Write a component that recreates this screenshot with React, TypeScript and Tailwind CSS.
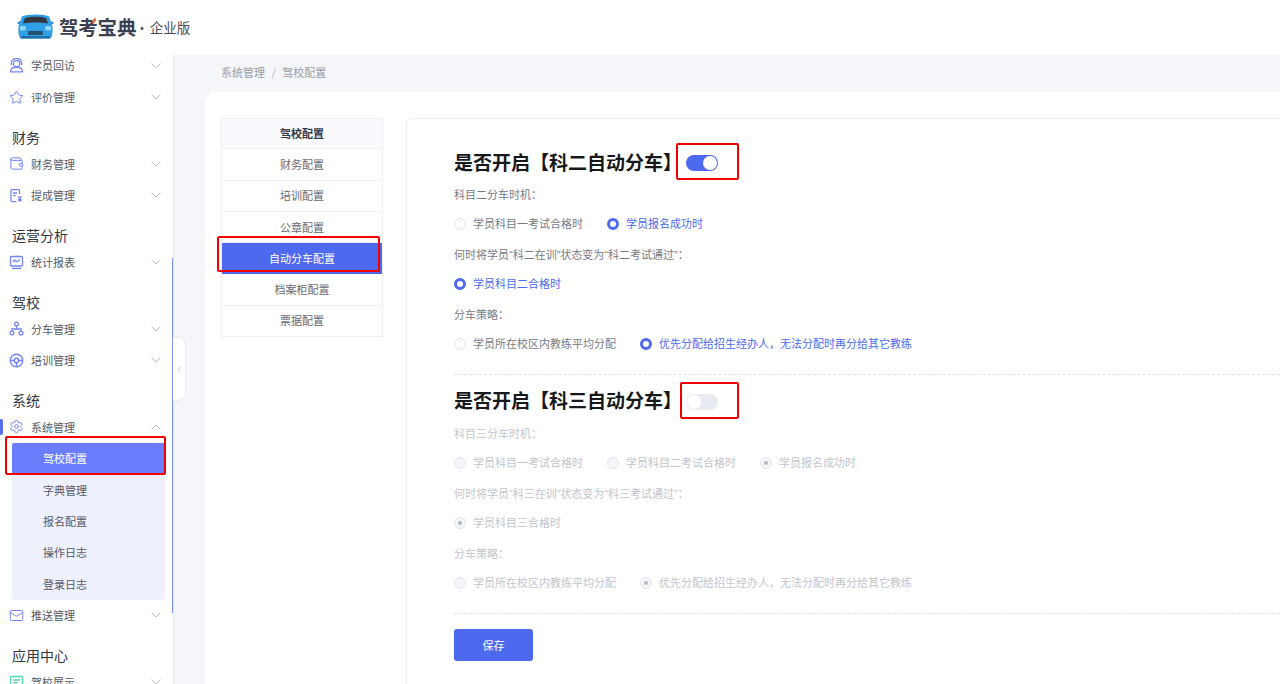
import { ChevronDown, ChevronUp, ChevronLeft, Star, Wallet, Settings, Mail } from "lucide-react";
import type { ReactNode } from "react";

const C = "#7485fb";

const IconUser = () => (
  <svg width="15" height="15" viewBox="0 0 15 15" fill="none" stroke={C} strokeWidth="1.3">
    <circle cx="7.5" cy="5.6" r="3.2" />
    <path d="M2.3 7V5.5a5.2 5.2 0 0 1 10.4 0V7" />
    <path d="M1.500 13.800c0-2.600 1.800-4.200 4-4.500h4c2.200.3 4 1.900 4 4.500z" />
  </svg>
);
const IconFile = () => (
  <svg width="15" height="15" viewBox="0 0 15 15" fill="none" stroke={C} strokeWidth="1.3">
    <path d="M10.500 6V2.600a1 1 0 0 0-1-1H3a1 1 0 0 0-1 1v10a1 1 0 0 0 1 1h4.500" />
    <path d="M4 5h4M4 7.600h2.500" />
    <path d="M9.300 8.300l1.600 1.900 1.600-1.900M10.900 10.200v3.400M9.200 11.300h3.400M9.200 12.600h3.400" />
  </svg>
);
const IconChart = () => (
  <svg width="15" height="15" viewBox="0 0 15 15" fill="none" stroke={C} strokeWidth="1.3">
    <rect x="1.500" y="1.500" width="12" height="9.500" rx="1" />
    <path d="M3.800 7l2-1.800 2.200 1.600 3-2.400" />
    <path d="M3 13.400h9" />
  </svg>
);
const IconTree = () => (
  <svg width="15" height="15" viewBox="0 0 15 15" fill="none" stroke={C} strokeWidth="1.3">
    <circle cx="7.500" cy="3" r="1.900" />
    <circle cx="2.900" cy="12" r="1.900" />
    <circle cx="12.100" cy="12" r="1.900" />
    <path d="M7.500 5v3M2.900 10V8h9.200v2" />
  </svg>
);
const IconWheel = () => (
  <svg width="15" height="15" viewBox="0 0 15 15" fill="none" stroke={C} strokeWidth="1.400">
    <circle cx="7.500" cy="7.500" r="6.300" />
    <circle cx="7.500" cy="7.500" r="2.200" />
    <path d="M1.200 7.500h3.800M10 7.500h3.800M7.500 10v3.800" />
  </svg>
);
const IconGreen = () => (
  <svg width="15" height="15" viewBox="0 0 15 15" fill="none" stroke="#56d8a8" strokeWidth="1.300">
    <rect x="1.500" y="1.500" width="12" height="12" rx="1" />
    <path d="M4.200 5h6.600M4.200 7.600h4.500M4.200 10.200h6.600" />
  </svg>
);

const Row = ({ icon, label, open }: { icon: ReactNode; label: string; open?: boolean }) => (
  <div className="relative flex h-[31.4px] shrink-0 items-center pl-[9px] pr-[9px] text-[11px] text-[#555a66]">
    <span className="flex w-[22px] shrink-0 items-center">{icon}</span>
    <span className="flex-1">{label}</span>
    {open ? (
      <ChevronUp size={16} strokeWidth={1.2} color="#a8abb8" />
    ) : (
      <ChevronDown size={16} strokeWidth={1.2} color="#a8abb8" />
    )}
  </div>
);

const Group = ({ title }: { title: string }) => (
  <div className="flex h-[35.4px] shrink-0 items-end pl-[12px] pb-[1px] text-[14px] leading-[20px] text-[#33363f]">{title}</div>
);

const Sub = ({ label, active }: { label: string; active?: boolean }) => (
  <div
    className={
      active
        ? "flex h-[31.4px] items-center rounded-t-[2px] bg-[#6a7dff] pl-[31px] text-[11px] text-white"
        : "flex h-[31.4px] items-center pl-[31px] text-[11px] text-[#555a66]"
    }
  >
    {label}
  </div>
);

const Radio = ({ label, on, off }: { label: string; on?: boolean; off?: boolean }) => {
  let dot = <span className="h-[12px] w-[12px] rounded-full border border-[#dfe2ea] bg-white" />;
  if (on && !off) {
    dot = <span className="h-[12px] w-[12px] rounded-full border-[3.5px] border-[#4d69ee] bg-white" />;
  } else if (off && on) {
    dot = (
      <span className="flex h-[12px] w-[12px] items-center justify-center rounded-full border border-[#e4e6ee] bg-[#f5f6fa]">
        <span className="h-[4px] w-[4px] rounded-full bg-[#b4b7c0]" />
      </span>
    );
  } else if (off) {
    dot = <span className="h-[12px] w-[12px] rounded-full border border-[#e4e6ee] bg-[#f5f6fa]" />;
  }
  const color = off ? "text-[#c2c5cc]" : on ? "text-[#4d69ee]" : "text-[#777b85]";
  return (
    <div className="mr-[24px] flex items-center">
      {dot}
      <span className={`ml-[7px] text-[11px] ${color}`}>{label}</span>
    </div>
  );
};

const Label = ({ children, off }: { children: ReactNode; off?: boolean }) => (
  <div className={`flex h-[31px] items-center pt-[2px] text-[11px] ${off ? "text-[#c2c5cc]" : "text-[#777b85]"}`}>
    <span>{children}</span>
  </div>
);
const RadioRow = ({ children }: { children: ReactNode }) => <div className="flex h-[29px] items-center">{children}</div>;

const Q = ({ c }: { c: string }) => <span style={{ fontFamily: '"Liberation Sans", sans-serif' }}>{c}</span>;

const Heading = ({ text, on, boxClass, hClass }: { text: string; on?: boolean; boxClass: string; hClass: string }) => (
  <div className={`relative flex items-center ${hClass}`}>
    <span className="w-[232px] text-[19px] font-bold text-[#17181c]">{text}</span>
    {on ? (
      <span className="relative top-[1px] flex h-[16px] w-[32px] items-center justify-end rounded-full bg-[#4d69ee] pr-[1px]">
        <span className="h-[14px] w-[14px] rounded-full bg-white" />
      </span>
    ) : (
      <span className="relative top-[1px] flex h-[16px] w-[32px] items-center rounded-full bg-[#e9ebf2] pl-[1px]">
        <span className="h-[14px] w-[14px] rounded-full bg-white" />
      </span>
    )}
    <span className={`absolute rounded-[2px] border-2 border-[#f00000] ${boxClass}`} />
  </div>
);

const leftMenu = ["财务配置", "培训配置", "公章配置", "自动分车配置", "档案柜配置", "票据配置"];

export default function App() {
  return (
    <div
      className="flex h-[684px] w-[1280px] flex-col overflow-hidden bg-[#f5f6fa]"
      style={{ fontFamily: '"Noto Sans CJK SC", "Noto Sans", sans-serif' }}
    >
      <header className="relative z-10 flex h-[55px] shrink-0 items-center bg-white pl-[17px] pb-[1px]">
        <svg width="37" height="26" viewBox="0 0 37 26" className="mb-[2px]">
          <path d="M0 9.500l5-2 1 3-5 .5z" fill="#2a86c8" />
          <path d="M37 9.500l-5-2-1 3 5 .5z" fill="#2a86c8" />
          <path d="M5 3.500C10 .8 27 .8 32 3.500l3 8c1 3 1 9-.5 12.500-.4 1-1 1.500-2 1.500h-28c-1 0-1.600-.5-2-1.500C1 20.500 1 14.500 2 11.500z" fill="#2f9fe8" />
          <path d="M8 5c5-1.600 16-1.600 21 0l2 5.500c-7-1.400-18-1.400-25 0z" fill="#33363f" />
          <rect x="2.800" y="13" width="6" height="4.500" rx="1.500" fill="#8fd6f7" />
          <rect x="28.200" y="13" width="6" height="4.500" rx="1.500" fill="#8fd6f7" />
          <rect x="11" y="18" width="15" height="4" rx="1" fill="#24506f" />
          <rect x="4" y="23" width="29" height="2.500" rx="1" fill="#1f6fa8" />
        </svg>
        <span className="relative ml-[5px] text-[19.5px] font-bold tracking-[-0.2px] text-[#3a3f51]">
          驾考宝典
          <span className="absolute left-[34px] top-[6px] h-[6px] w-[2px] rotate-[25deg] bg-[#ef6a3a]" />
        </span>
        <span className="ml-[-1px] text-[13.5px] text-[#4a4e5c]">·</span>
        <span className="ml-[1px] text-[13.5px] text-[#4a4e5c]">企业版</span>
      </header>

      <div className="flex min-h-0 flex-1">
        <aside className="relative z-10 w-[174px] shrink-0 border-r border-[#e8eaf2] bg-white">
          <div className="-mt-[5px] flex h-[634px] flex-col overflow-hidden">
            <Row icon={<IconUser />} label="学员回访" />
            <Row icon={<Star size={15} strokeWidth={1.6} color={C} />} label="评价管理" />
            <Group title="财务" />
            <Row icon={<Wallet size={15} strokeWidth={1.6} color={C} />} label="财务管理" />
            <Row icon={<IconFile />} label="提成管理" />
            <Group title="运营分析" />
            <Row icon={<IconChart />} label="统计报表" />
            <Group title="驾校" />
            <Row icon={<IconTree />} label="分车管理" />
            <Row icon={<IconWheel />} label="培训管理" />
            <Group title="系统" />
            <Row icon={<Settings size={15} strokeWidth={1.6} color={C} />} label="系统管理" open />
            <div className="ml-[12px] w-[153px] shrink-0 rounded-[3px] bg-[#eef0fd]">
              <Sub label="驾校配置" active />
              <Sub label="字典管理" />
              <Sub label="报名配置" />
              <Sub label="操作日志" />
              <Sub label="登录日志" />
            </div>
            <Row icon={<Mail size={15} strokeWidth={1.6} color={C} />} label="推送管理" />
            <Group title="应用中心" />
            <Row icon={<IconGreen />} label="驾校展示" />
          </div>
          <span className="absolute left-0 top-[364px] h-[16px] w-[3px] rounded-r-[2px] bg-[#5a6ff0]" />
          <span className="absolute left-[5px] top-[381px] h-[39px] w-[161px] rounded-[2px] border-2 border-[#f00000]" />
          <span className="absolute right-0 top-[203px] h-[355px] w-[1px] bg-[#7f8ffb]" />
          <span className="absolute left-[173px] top-[282px] flex h-[64px] w-[13px] items-center justify-center rounded-r-[8px] border border-l-0 border-[#eceef4] bg-white">
            <ChevronLeft size={11} strokeWidth={1.2} color="#a8abb8" />
          </span>
        </aside>

        <main className="min-w-0 flex-1 pl-[31px]">
          <div className="flex h-[37px] items-center pb-[2px] pl-[16px] text-[11px] text-[#9a9da6]">
            <span>系统管理</span>
            <span className="mx-[6.500px] text-[#b5b8c0]">/</span>
            <span>驾校配置</span>
          </div>
          <div className="flex h-[592px] rounded-tl-[10px] bg-white pl-[16px] pt-[26px]">
            <nav className="h-[219px] w-[162px] shrink-0 border-x border-b border-[#eef0f6] text-[11px]">
              <div className="flex h-[31.4px] items-center justify-center border-y border-[#eef0f6] bg-[#f9fafe] font-bold text-[#33384a]">
                驾校配置
              </div>
              {leftMenu.map((m) =>
                m === "自动分车配置" ? (
                  <div key={m} className="flex h-[31.4px] items-center justify-center bg-[#4d69ee] text-white">
                    {m}
                  </div>
                ) : (
                  <div key={m} className="flex h-[31.2px] items-center justify-center border-b border-[#eef0f6] text-[#666a74]">
                    {m}
                  </div>
                ),
              )}
            </nav>
            <span className="absolute left-[217px] top-[236px] h-[36px] w-[163px] rounded-[2px] border-2 border-[#f00000]" />

            <section className="ml-[23px] flex-1 rounded-tl-[6px] border-l border-t border-[#eef0f6] pl-[47px] pt-[27px]">
              <Heading text="是否开启【科二自动分车】" on hClass="h-[32px]" boxClass="left-[222px] -top-[3px] h-[37px] w-[63px]" />
              <Label>科目二分车时机：</Label>
              <RadioRow>
                <Radio label="学员科目一考试合格时" />
                <Radio label="学员报名成功时" on />
              </RadioRow>
              <Label>
                何时将学员<Q c="“" />科二在训<Q c="”" />状态变为<Q c="“" />科二考试通过<Q c="”" />：
              </Label>
              <RadioRow>
                <Radio label="学员科目二合格时" on />
              </RadioRow>
              <Label>分车策略：</Label>
              <RadioRow>
                <Radio label="学员所在校区内教练平均分配" />
                <Radio label="优先分配给招生经办人，无法分配时再分给其它教练" on />
              </RadioRow>
              <div className="mt-[16px] border-t border-dashed border-[#dfe2e8]" />
              <div className="mt-[9px]">
                <Heading text="是否开启【科三自动分车】" hClass="h-[33px]" boxClass="left-[226px] -top-[2px] h-[37px] w-[59px]" />
              </div>
              <Label off>科目三分车时机：</Label>
              <RadioRow>
                <Radio label="学员科目一考试合格时" off />
                <Radio label="学员科目二考试合格时" off />
                <Radio label="学员报名成功时" off on />
              </RadioRow>
              <Label off>
                何时将学员<Q c="“" />科三在训<Q c="”" />状态变为<Q c="“" />科三考试通过<Q c="”" />：
              </Label>
              <RadioRow>
                <Radio label="学员科目三合格时" off on />
              </RadioRow>
              <Label off>分车策略：</Label>
              <RadioRow>
                <Radio label="学员所在校区内教练平均分配" off />
                <Radio label="优先分配给招生经办人，无法分配时再分给其它教练" off on />
              </RadioRow>
              <div className="mt-[16px] border-t border-dashed border-[#dfe2e8]" />
              <button className="mt-[15px] flex h-[32px] w-[79px] items-center justify-center rounded-[3px] bg-[#4d69ee] text-[11px] text-white">
                保存
              </button>
            </section>
          </div>
        </main>
      </div>
    </div>
  );
}
